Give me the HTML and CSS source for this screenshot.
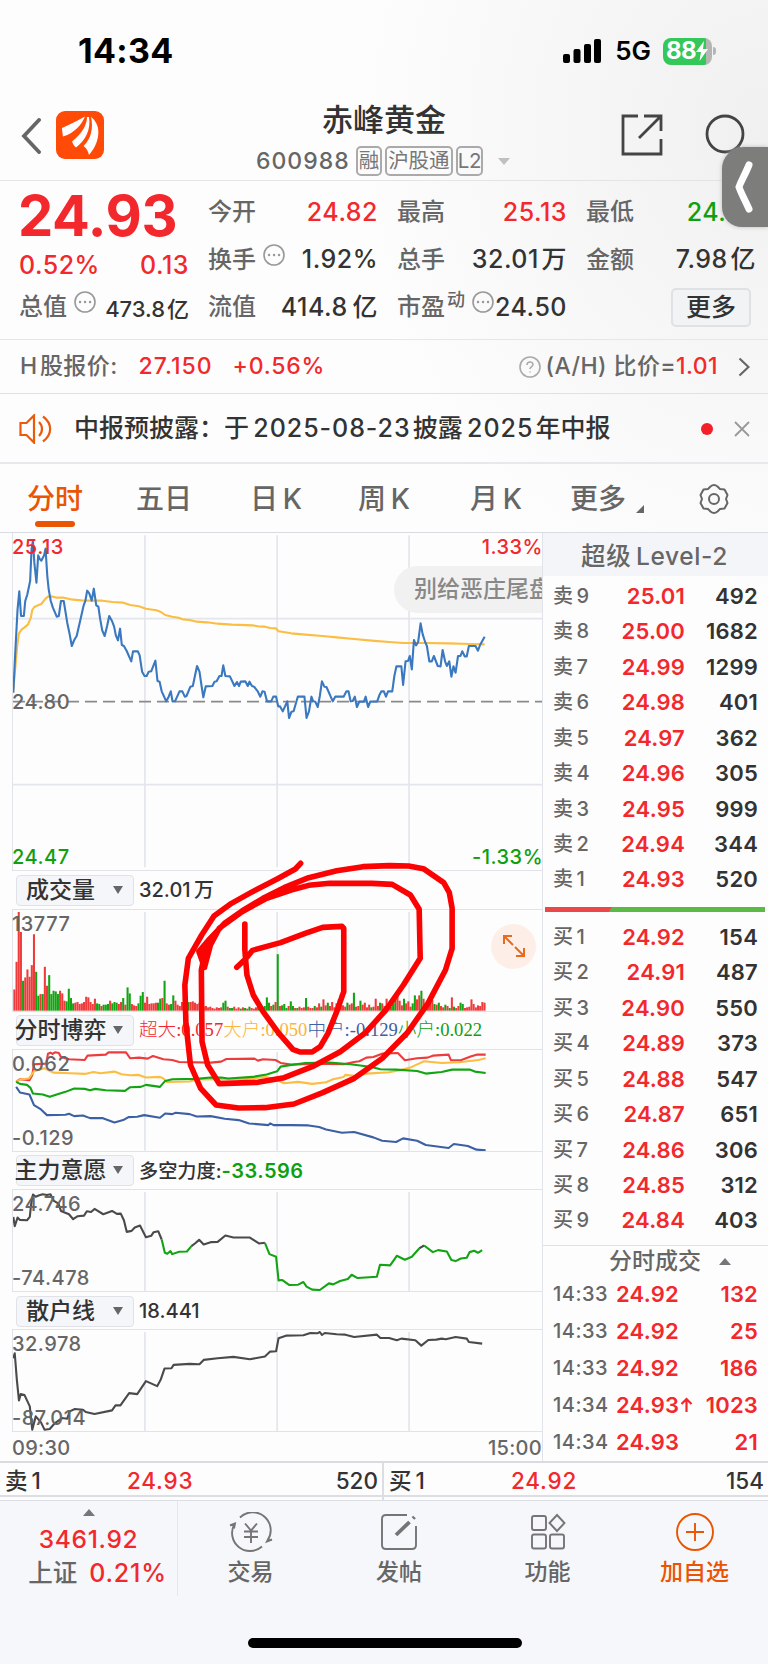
FILE: index.html
```html
<!DOCTYPE html>
<html lang="zh-CN">
<head>
<meta charset="utf-8">
<title>赤峰黄金 600988</title>
<link rel="stylesheet" href="styles.css">
</head>
<body>
<div class="phone">
  <div class="status">
    <span class="time">14:34</span>
    <span class="sys">
      <svg class="signal" viewBox="0 0 38 24"><rect x="0" y="15" width="7" height="9" rx="2"/><rect x="10.5" y="10" width="7" height="14" rx="2"/><rect x="21" y="5" width="7" height="19" rx="2"/><rect x="31" y="0" width="7" height="24" rx="2"/></svg>
      <b class="net">5G</b>
      <span class="batt"><b>88</b><svg viewBox="0 0 12 20"><path d="M8 0 0 11h5L3.500 20 12 8H7z" fill="#fff"/></svg></span><i class="nub"></i>
    </span>
  </div>

  <header class="head">
    <svg class="back" viewBox="0 0 20 36"><path d="M18 2 3 18 18 34"/></svg>
    <svg class="logo" viewBox="0 0 48 48"><rect width="48" height="48" rx="9" fill="#ff4a08"/><path fill="#fff" d="M6 17C13 14 21 10 29 5.500 26 13 19 22 7 25.500 6.500 22 6 19 6 17zM31 6C31 13 27 22 16 30.500 17 33 18 35 20 36.500 30 29 35 18 33 6zM35 6C47 15 43 33 33 44 32 40 31 38 27.500 35 35 28 37.500 17 35 6z"/></svg>
    <div class="title">
      <h1>赤峰黄金</h1>
      <div class="code"><span>600988</span><i>融</i><i>沪股通</i><i class="l2">L2</i><em class="tri down"></em></div>
    </div>
    <svg class="share" viewBox="0 0 42 42"><path d="M17 2H2V40H40V25M23 2H40V17M40 2 18 24"/></svg>
    <svg class="search" viewBox="0 0 48 48"><circle cx="20" cy="20" r="18"/><path d="m33 33 11 11"/></svg>
  </header>
  <div class="drawer"><svg viewBox="0 0 24 56"><path d="M17 6C11 20 9 22 7 28 9 34 11 37 17 50"/></svg></div>

  <section class="quote">
    <div class="col first">
      <strong class="last">24.93</strong>
      <div class="row red chg"><b>0.52%</b><span>0.13</span></div>
      <div class="row mv"><label>总值</label><svg class="dots" viewBox="0 0 22 22"><circle cx="11" cy="11" r="10"/><path d="M6 11h.1M11 11h.1M16 11h.1"/></svg><span>473.8&#8202;亿</span></div>
    </div>
    <div class="col">
      <div class="row"><label>今开</label><span class="red">24.82</span></div>
      <div class="row"><label>换手</label><svg class="dots" viewBox="0 0 22 22"><circle cx="11" cy="11" r="10"/><path d="M6 11h.1M11 11h.1M16 11h.1"/></svg><span>1.92%</span></div>
      <div class="row"><label>流值</label><span>414.8&#8201;亿</span></div>
    </div>
    <div class="col">
      <div class="row"><label>最高</label><span class="red">25.13</span></div>
      <div class="row"><label>总手</label><span>32.01&#8202;万</span></div>
      <div class="row"><label>市盈<sup>动</sup></label><svg class="dots" viewBox="0 0 22 22"><circle cx="11" cy="11" r="10"/><path d="M6 11h.1M11 11h.1M16 11h.1"/></svg><span>24.50</span></div>
    </div>
    <div class="col">
      <div class="row"><label>最低</label><span class="green">24.77</span></div>
      <div class="row"><label>金额</label><span>7.98&#8202;亿</span></div>
      <div class="row"><button class="more">更多</button></div>
    </div>
  </section>

  <section class="hshare">
    <span>H&#8202;股报价:</span><b class="red p1">27.150</b><b class="red p2">+0.56%</b>
    <svg class="help" viewBox="0 0 22 22"><circle cx="11" cy="11" r="10"/><path d="M8 9c0-4 6-4 6-.5 0 2-3 2.200-3 4.500M11 15.500v1"/></svg>
    <span class="ratio">(A/H) 比价=<b class="red">1.01</b></span>
    <svg class="chev" viewBox="0 0 12 20"><path d="m1.500 1.500 9 8.500-9 8.500"/></svg>
  </section>

  <section class="notice">
    <svg class="horn" viewBox="0 0 33 30"><path d="M1.500 9h6L15 1.500v27L7.500 21h-6zM20 8c4 4 4 10 0 14M24 2.500c9.500 7 9.500 18 0 25"/></svg>
    <p>中报预披露：于&#8201;<span>2025-08-23</span>&#8202;披露&#8201;<span>2025</span>&#8202;年中报</p>
    <i class="dot"></i>
    <svg class="close" viewBox="0 0 16 16"><path d="m1 1 14 14M15 1 1 15"/></svg>
  </section>

  <nav class="tabs">
    <span class="on">分时</span><span>五日</span><span>日&#8201;K</span><span>周&#8201;K</span><span>月&#8201;K</span><span class="mt">更多<i></i></span>
    <svg class="gear" viewBox="0 0 32 32"><path d="M12.500 3.500Q16 .5 19.500 3.500L22 6 26.500 6.500 29.500 12 28 16 29.500 20 26.500 25.500 22 26 19.500 28.500Q16 31.500 12.500 28.500L10 26 5.500 25.500 2.500 20 4 16 2.500 12 5.500 6.500 10 6z"/><circle cx="16" cy="16" r="5"/></svg>
  </nav>

  <main class="board">
    <div class="charts">
      <div class="plot price">
        <svg viewBox="35 11 1512 1011" preserveAspectRatio="none">
          <path class="grid" d="M412 18V1014M790 18V1014M1167 18V1014M35 268H1547M35 766H1547"/>
          <path class="dash" d="M35 517H1547"/>
          <path class="ln amber" d="M36 480 42 410 47 350 52 312 60 300 68 294 78 285 86 265 90 242 96 233 106 228 116 224 128 208 136 201 150 202 160 205 180 205 200 210 230 213 255 214 290 214 320 218 350 220 370 227 395 231 415 238 445 243 458 248 470 257 490 262 508 265 520 270 540 272 560 277 590 279 620 283 660 286 720 288 735 291 755 292 770 296 786 297 794 306 830 312 870 316 920 320 960 324 1010 329 1060 334 1110 338 1150 341 1220 341 1280 342 1340 344 1383 345"/>
          <path class="ln blue" d="M36 490 40 400 44 320 48 240 53 186 58 260 66 260 70 215 76 195 84 155 88 60 92 34 96 100 102 160 107 78 112 90 116 94 124 78 128 58 133 140 137 180 143 215 149 235 160 262 166 260 172 215 180 215 190 280 197 315 203 350 210 332 217 320 228 270 237 228 242 214 247 184 253 192 260 214 266 178 273 228 279 232 284 268 290 303 297 320 304 290 310 260 318 275 324 292 329 318 335 333 341 298 346 347 352 350 360 365 373 396 378 366 392 366 397 378 404 427 411 440 417 440 423 427 430 426 442 394 448 455 454 457 460 486 473 516 480 502 486 486 491 516 498 516 511 486 519 486 526 502 531 500 542 472 549 470 555 440 561 410 568 427 574 470 579 504 586 471 605 470 611 457 617 456 625 440 631 440 636 408 642 440 655 441 668 470 675 458 681 470 686 457 699 456 706 470 711 457 718 470 724 472 735 487 742 502 748 486 754 487 761 516 773 516 779 502 787 502 793 531 798 531 806 546 819 516 824 566 831 547 837 546 849 502 868 502 874 566 881 546 888 502 893 516 899 517 906 533 912 500 918 456 925 472 931 473 949 516 956 502 980 502 988 486 994 486 1000 516 1006 515 1012 502 1018 533 1025 517 1038 517 1043 502 1050 533 1056 517 1076 516 1082 498 1088 486 1095 486 1101 502 1107 486 1119 486 1125 440 1131 411 1145 411 1150 467 1157 396 1164 395 1169 380 1175 420 1181 332 1187 348 1193 338 1200 282 1206 315 1213 338 1218 350 1225 396 1232 396 1238 380 1249 410 1257 411 1263 362 1270 396 1275 410 1282 396 1288 442 1294 411 1300 430 1307 380 1314 380 1319 366 1326 381 1332 381 1338 350 1357 350 1364 364 1370 347 1383 322"/>
        </svg>
        <span class="tl red">25.13</span><span class="tr red">1.33%</span><span class="ml">24.80</span><span class="bl green">24.47</span><span class="br green">-1.33%</span>
        <div class="barrage">别给恶庄尾盘</div>
      </div>
      <div class="ind"><div class="sel">成交量<i></i></div><span>32.01&#8201;万</span></div>
      <div class="plot sub">
        <svg viewBox="35 149 1512 304" preserveAspectRatio="none">
          <path class="grid" d="M412 155V454M790 155V454M1167 155V454"/>
          <g id="vol"></g>
        </svg>
        <span class="tl">13777</span>
        <div class="expand"><svg viewBox="0 0 24 24"><path d="M2 10V2h8M2 2l9 9M22 14v8h-8M22 22l-9-9"/></svg></div>
      </div>
      <div class="ind"><div class="sel">分时博弈<i></i></div><span class="legend"><span class="red">超大:0.057</span><span class="c2">大户:0.050</span><span class="c3">中户:-0.129</span><span class="green">小户:0.022</span></span></div>
      <div class="plot sub">
        <svg viewBox="35 569 1512 304" preserveAspectRatio="none">
          <path class="grid" d="M412 575V872M790 575V872M1167 575V872"/>
          <path class="ln r" d="M44 665 55 657 82 660 90 645 95 612 130 610 135 580 142 577 148 581 155 576 166 578 172 590 195 597 240 599 248 586 300 583 308 576 358 576 370 594 395 592 420 595 435 587 465 597 490 599 510 605 600 607 630 604 645 596 725 595 735 601 750 597 785 599 800 608 830 613 900 610 980 612 1010 605 1025 603 1045 592 1065 590 1090 580 1135 578 1155 600 1190 594 1220 592 1235 586 1280 583 1287 600 1315 600 1345 588 1360 583 1386 583"/>
          <path class="ln amber" d="M44 665 55 658 80 655 95 633 125 624 150 637 200 639 240 641 265 635 285 639 325 634 345 642 370 645 395 644 415 652 455 650 465 655 475 665 540 664 560 658 640 657 700 656 760 650 790 660 810 669 850 665 890 671 930 666 950 657 980 650 985 644 1020 648 1045 640 1110 636 1140 630 1170 622 1195 610 1210 603 1260 608 1310 606 1340 602 1365 599 1386 594"/>
          <path class="ln g" d="M44 665 55 671 75 674 85 683 92 700 120 703 140 710 160 703 185 695 210 685 240 686 255 690 270 686 300 690 355 692 370 681 400 680 415 674 455 680 470 662 490 657 560 656 600 652 630 652 650 655 720 650 760 643 790 633 800 619 830 614 870 608 940 607 1000 612 1060 620 1085 627 1130 628 1190 632 1215 640 1260 635 1290 628 1340 628 1355 634 1386 638"/>
          <path class="ln n" d="M44 680 55 697 82 703 95 735 115 748 132 765 185 764 195 761 210 768 235 766 255 774 290 774 325 787 350 780 365 771 390 770 410 765 455 773 470 760 490 762 500 758 540 762 560 769 600 768 640 776 680 780 710 790 765 795 770 790 780 795 830 795 880 796 910 801 930 808 975 818 1010 816 1065 832 1090 842 1130 846 1150 835 1190 842 1215 855 1280 864 1295 852 1335 858 1360 869 1386 871"/>
        </svg>
        <span class="tl">0.062</span><span class="bl">-0.129</span>
      </div>
      <div class="ind"><div class="sel">主力意愿<i></i></div><span class="force">多空力度:<b class="green">-33.596</b></span></div>
      <div class="plot sub">
        <svg viewBox="35 119 1512 304" preserveAspectRatio="none">
          <path class="grid" d="M412 125V424M790 125V424M1167 125V424"/>
          <path class="ln k" d="M36 200 40 228 48 202 55 209 75 210 83 200 87 160 92 133 100 139 110 135 120 132 132 134 142 132 152 152 165 160 172 182 195 192 207 207 220 198 238 196 246 183 258 185 268 176 293 192 318 182 332 191 343 190 352 210 360 245 374 242 383 232 398 226 415 261 430 257 437 246 450 243 460 268"/>
          <path class="ln g" d="M460 268 469 308 476 311 485 303 490 312 510 305 532 304 545 288"/>
          <path class="ln k" d="M545 288 555 280 567 269 580 283 600 276 620 275 642 256 665 262 712 262 738 280 755 278"/>
          <path class="ln g" d="M755 278 768 312 787 320 794 391 805 390 825 405 850 404 865 396 874 410 890 419 912 420 938 400 950 403 970 393 992 387 1003 374 1020 384 1075 380 1084 344 1113 346 1132 317 1155 329 1175 320 1196 295"/>
          <path class="ln k" d="M1196 295 1210 286"/>
          <path class="ln g" d="M1210 286 1235 306 1250 300 1275 304 1288 330 1300 333 1315 325 1332 323 1340 306 1353 302 1364 308 1376 300"/>
        </svg>
        <span class="tl">24.746</span><span class="bl">-74.478</span>
      </div>
      <div class="ind"><div class="sel">散户线<i></i></div><span>18.441</span></div>
      <div class="plot sub">
        <svg viewBox="35 540 1512 304" preserveAspectRatio="none">
          <path class="grid" d="M412 546V845M790 546V845M1167 546V845"/>
          <path class="ln k" d="M36 625 40 610 46 690 52 752 57 733 68 736 83 770 90 840 100 800 115 818 125 840 140 838 155 820 175 805 190 807 197 785 212 778 235 780 243 787 268 793 318 782 328 767 342 767 367 730 390 733 415 694 447 709 457 690 468 656 488 655 494 645 540 642 568 643 580 630 620 625 665 621 712 628 755 620 770 605 787 604 794 565 815 557 865 556 885 549 905 550 912 546 918 555 926 549 960 553 985 554 1010 561 1075 554 1085 564 1110 564 1132 571 1145 566 1185 571 1202 587 1222 570 1245 569 1260 566 1272 568 1300 561 1332 566 1338 576 1376 581"/>
        </svg>
        <span class="tl">32.978</span><span class="bl">-87.014</span>
      </div>
      <div class="axis"><span>09:30</span><span>15:00</span></div>
      <svg class="scribble" viewBox="0 0 1568 960" preserveAspectRatio="none"><path d="M857 10 842 27 790 57 720 95 660 130 610 168 575 225 537 295 527 375 530 490 543 615 572 685 616 735 680 744 755 743 838 732 920 698 1010 655 1090 595 1160 520 1220 430 1270 330 1289 265 1289 145 1281 98 1265 68 1207 26 1165 18 1110 17 1035 20 960 32 880 53 810 83 750 115 690 153 640 190 595 240 567 275 583 322M583 322 600 255 625 205 690 155 760 115 830 90 880 76 940 70 1060 70 1118 73 1170 105 1195 148 1198 295 1150 375 1100 450 1040 520 970 575 890 620 810 653 735 667 625 671 592 615 576 545 574 330 590 250M698 192V270L704 345 722 405 750 455 795 520 835 568 855 576 890 576 913 560 935 520 960 455 980 395V205L975 199 920 202 870 220 800 248 720 271 700 297 675 322"/></svg>
    </div>

    <aside class="book">
      <h2>超级&#8201;Level-2</h2>
      <ul class="levels sell">
        <li><label>卖&#8201;9</label><b>25.01</b><span>492</span></li>
        <li><label>卖&#8201;8</label><b>25.00</b><span>1682</span></li>
        <li><label>卖&#8201;7</label><b>24.99</b><span>1299</span></li>
        <li><label>卖&#8201;6</label><b>24.98</b><span>401</span></li>
        <li><label>卖&#8201;5</label><b>24.97</b><span>362</span></li>
        <li><label>卖&#8201;4</label><b>24.96</b><span>305</span></li>
        <li><label>卖&#8201;3</label><b>24.95</b><span>999</span></li>
        <li><label>卖&#8201;2</label><b>24.94</b><span>344</span></li>
        <li><label>卖&#8201;1</label><b>24.93</b><span>520</span></li>
      </ul>
      <div class="balance"></div>
      <ul class="levels buy">
        <li><label>买&#8201;1</label><b>24.92</b><span>154</span></li>
        <li><label>买&#8201;2</label><b>24.91</b><span>487</span></li>
        <li><label>买&#8201;3</label><b>24.90</b><span>550</span></li>
        <li><label>买&#8201;4</label><b>24.89</b><span>373</span></li>
        <li><label>买&#8201;5</label><b>24.88</b><span>547</span></li>
        <li><label>买&#8201;6</label><b>24.87</b><span>651</span></li>
        <li><label>买&#8201;7</label><b>24.86</b><span>306</span></li>
        <li><label>买&#8201;8</label><b>24.85</b><span>312</span></li>
        <li><label>买&#8201;9</label><b>24.84</b><span>403</span></li>
      </ul>
      <h3>分时成交<i class="tri up"></i></h3>
      <ul class="ticks">
        <li><label>14:33</label><b>24.92</b><span>132</span></li>
        <li><label>14:33</label><b>24.92</b><span>25</span></li>
        <li><label>14:33</label><b>24.92</b><span>186</span></li>
        <li><label>14:34</label><b>24.93<svg viewBox="0 0 13 16"><path d="M6.500 15V2M1.500 7l5-5 5 5"/></svg></b><span>1023</span></li>
        <li><label>14:34</label><b>24.93</b><span>21</span></li>
      </ul>
    </aside>
  </main>

  <div class="best">
    <div><label>卖&#8201;1</label><b class="red">24.93</b><span>520</span></div>
    <div><label>买&#8201;1</label><b class="red">24.92</b><span>154</span></div>
  </div>

  <footer class="foot">
    <div class="index"><i class="tri up"></i><b class="red">3461.92</b><p>上证<b class="red">0.21%</b></p></div>
    <div class="act"><svg class="wide" viewBox="0 0 44 40"><path d="M11 5.500A18 18 0 0 1 38.500 28.500M33 34.500A18 18 0 0 1 5.500 12M1 13.500 6 11.500 5 16.500M43 27.500 38 29.500 40.500 24.500M16 11.500 22 18.500 28 11.500M22 18.500V31M15 19.500H29M15 25H29"/></svg>交易</div>
    <div class="act"><svg viewBox="0 0 40 40"><path d="M28 3H7Q3 3 3 7V33Q3 37 7 37H33Q37 37 37 33V14"/><path class="thick" d="M17 23 30.500 10M34 6.500l1.500-1.500"/></svg>发帖</div>
    <div class="act"><svg viewBox="0 0 40 40"><rect x="4" y="4" width="14" height="14" rx="2"/><rect x="4" y="22.500" width="14" height="14" rx="2"/><rect x="22" y="22.500" width="14" height="14" rx="2"/><path d="m29 3 7.500 8-7.500 8-7.500-8z"/></svg>功能</div>
    <div class="act add"><svg viewBox="0 0 40 40"><circle cx="20" cy="20" r="18"/><path d="M20 11v18M11 20h18"/></svg>加自选</div>
    <div class="homebar"></div>
  </footer>
</div>
<script src="volume.js"></script>
</body>
</html>
```
FILE: volume.js
```js
// Per-minute volume; a negative value is a falling minute.
const volume = [64,147,297,237,-90,100,124,102,137,230,-117,-45,50,-50,132,75,-107,-50,-60,-58,-50,60,52,30,-28,-66,-38,-22,24,26,20,22,26,42,40,26,20,36,-22,-20,14,-18,-18,-20,30,-22,-26,-24,20,26,-38,18,-70,-52,20,16,14,-22,-45,-56,24,42,20,22,22,24,-24,-36,38,-90,22,18,-20,-46,30,18,14,26,20,14,-26,26,28,24,20,24,10,12,14,10,12,8,6,10,8,10,-24,-30,12,-8,-8,12,6,10,-6,10,-8,6,-12,8,6,10,-24,8,8,-14,-40,-24,14,-18,26,-170,14,-16,-20,-8,14,-28,-14,8,-8,12,8,10,-38,12,8,8,-14,10,22,-12,34,16,-24,14,26,10,22,-34,50,16,12,-24,18,22,-54,12,14,-30,18,24,10,18,-10,12,36,14,-24,22,14,36,18,12,-22,-38,46,30,16,-36,22,28,12,-22,-46,34,46,-60,36,-24,20,26,32,-20,18,-24,14,10,-18,14,-8,40,-12,8,14,-24,-20,8,10,12,34,20,10,16,14,26,24];
const svgNs = "http://www.w3.org/2000/svg";
const group = document.getElementById("vol");
volume.forEach((v, i) => {
  const bar = document.createElementNS(svgNs, "rect");
  bar.setAttribute("x", 36 + i * (1350 / volume.length));
  bar.setAttribute("y", 452 - Math.abs(v));
  bar.setAttribute("width", 5.9);
  bar.setAttribute("height", Math.abs(v));
  bar.setAttribute("class", v > 0 ? "up-bar" : "down-bar");
  group.appendChild(bar);
});
```
FILE: styles.css
```css
*{box-sizing:border-box}
body{margin:0;width:768px;height:1664px;overflow:hidden;background:#fdfdfe;color:#333;font-family:Inter,"Noto Sans CJK SC",sans-serif;font-size:24px;font-weight:500;line-height:1}
h1,h2,h3,p,ul{margin:0;padding:0;font-weight:500}
ul{list-style:none}
i,em{font-style:normal}
svg{display:block;fill:none;flex:none}
.phone{position:relative;width:769px;height:1664px;display:flex;flex-direction:column;background:radial-gradient(ellipse 420px 480px at 768px 130px,#f0f0f0,rgba(253,253,254,0)) no-repeat}
.red{color:#f3282c}
.green{color:#0f9f0f}
label{color:#666}
.tri{width:0;height:0;border:6px solid transparent}
.tri.down{border-top:7px solid #c0c0c0;border-bottom:0}
.tri.up{border-bottom:7px solid #75757b;border-top:0}

.status{height:100px;padding:3px 53px 0 78px;display:flex;align-items:center;justify-content:space-between;color:#000}
.time{font-size:34px;font-weight:700;letter-spacing:.3px}
.sys{display:flex;align-items:center}
.signal{width:38px;height:24px;fill:#000}
.net{font-size:26px;font-weight:600;margin-left:14px}
.batt{width:49px;height:27px;margin-left:12px;border-radius:8px;background:linear-gradient(90deg,#34c759 88%,#b5b5b5 88%);color:#fff;display:flex;align-items:center;padding-left:3px}
.batt b{font-size:24px;font-weight:700;letter-spacing:-.5px}
.batt svg{width:12px;height:20px}
.nub{width:3px;height:8px;margin-left:1px;background:#b5b5b5;border-radius:0 3px 3px 0}

.head{height:81px;border-bottom:1px solid #e4e4e6;display:flex;align-items:flex-start;padding-left:21px}
.back{width:20px;height:36px;margin-top:18px;stroke:#666;stroke-width:3.800;stroke-linecap:round}
.logo{width:48px;height:48px;margin:11px 0 0 15px}
.title{width:252px;margin-left:152px;display:flex;flex-direction:column}
h1{font-size:31px;line-height:40px;padding-left:66px;white-space:nowrap}
.code{display:flex;align-items:center;margin-top:6px;height:31px;color:#666;font-size:23px}
.code span{letter-spacing:1px;margin-right:6px}
.code i{height:30px;border:2px solid #aaa;border-radius:5px;font-size:20.500px;line-height:26px;font-weight:400;color:#777;padding:0 1px;margin-right:3px;white-space:nowrap}
.code .l2{padding:0;letter-spacing:-.3px;width:28px;text-align:center}
.code em{margin-left:12px}
.share{width:42px;height:42px;margin:14px 0 0 113px;stroke:#444;stroke-width:2.800}
.search{width:48px;height:48px;margin:14px 0 0 42px;stroke:#444;stroke-width:2.800}
.drawer{position:absolute;left:722px;top:147px;width:46px;height:80px;background:#7d7e7c;border-radius:22px 0 0 20px;padding:12px 0 0 10px;box-shadow:0 0 4px #bbb}
.drawer svg{width:24px;height:56px;stroke:#fff;stroke-width:7;stroke-linecap:round}

.quote{height:159px;border-bottom:1px solid #e6e6e9;padding:8px 12px 0 19px;display:grid;grid-template-columns:repeat(4,169px);gap:20px;font-size:25px}
.col .row{height:47.500px;display:flex;align-items:center;white-space:nowrap}
.row label{font-size:24px}
.row b{font-weight:500}
.row span,.row b{letter-spacing:.5px}
.row span{margin-left:auto;margin-right:-1px}
.last{display:block;height:56px;font-size:56px;line-height:54px;font-weight:700;color:#f3282c;letter-spacing:-.3px;margin-left:-1px}
.col .chg{height:42px}
.col .mv{height:41px}
.col .mv span{font-size:22px;padding-top:4px;letter-spacing:0}
.row sup{font-size:18px;vertical-align:9px;line-height:0;margin-left:2px}
.dots{width:22px;height:22px;margin:-10px 0 0 7px;stroke:#999;stroke-width:1.600}
.dots path{stroke-width:2.400;stroke-linecap:round}
.more{width:80px;height:39px;margin:0 4px 0 auto;border:2px solid #dfe1e5;border-radius:5px;background:#f2f3f5;font:500 25px/1 Inter,"Noto Sans CJK SC",sans-serif;color:#333;padding:0}

.hshare{height:55px;border-bottom:1px solid #dfe1e4;display:flex;align-items:center;padding:1px 19px 0 20px;color:#666;font-size:23px;letter-spacing:.4px;white-space:nowrap}
.hshare b{font-weight:500}
.p1{margin-left:21px;letter-spacing:1px}.p2{margin-left:20px;letter-spacing:.8px}
.help{width:22px;height:22px;margin-left:auto;stroke:#aaa;stroke-width:1.600}
.ratio{margin-left:5px}
.chev{width:12px;height:20px;margin-left:20px;stroke:#666;stroke-width:2.200}

.notice{height:70px;border-bottom:2px solid #e7e8eb;display:flex;align-items:center;padding:1px 19px 0 19px}
.horn{width:33px;height:30px;stroke:#ea5a0c;stroke-width:2.200}
.notice p{margin-left:22px;font-size:25px;white-space:nowrap}
.notice p span{letter-spacing:.95px}
.dot{width:12px;height:12px;border-radius:50%;background:#f3202a;margin-left:auto}
.close{width:16px;height:16px;margin-left:21px;stroke:#999;stroke-width:1.800}

.tabs{height:69px;border-bottom:1px solid #d8dbe2;position:relative;display:grid;grid-template-columns:109px 114px 108px 112px 100px 128px 32px;padding:2px 0 0 27px;align-items:center;color:#666;font-size:28px;white-space:nowrap}
.on{color:#ea5504;position:relative}
.on:after{content:"";position:absolute;left:8px;top:36px;width:40px;height:6px;border-radius:3px;background:#ea5504}
.mt{display:flex;align-items:flex-end}
.mt i{border:4px solid #666;border-left-color:transparent;border-top-color:transparent;margin-left:10px}
.gear{width:32px;height:32px;stroke:#666;stroke-width:2;stroke-linejoin:round}

.board{height:928px;display:flex}
.charts{position:relative;width:543px;padding-left:12px}
.plot{position:relative;width:531px;border:1px solid #e1e3ea;border-top:0}
.plot>svg{width:100%;height:100%}
.price{height:338px}
.sub{height:102px}
.plot>span{position:absolute;font-size:20px;color:#666;letter-spacing:.5px}
.plot>.red{color:#f3282c}.plot>.green{color:#0f9f0f}
.plot>.tl{left:-1px;top:4px}.plot>.tr{right:-1px;top:4px}.plot>.ml{left:-1px;top:159px}.plot>.bl{left:-1px;bottom:3px}.plot>.br{right:-1px;bottom:3px}
.grid{stroke:#e4e6ee;stroke-width:1.700}
.dash{stroke:#8a8a8a;stroke-width:1.600;stroke-dasharray:12 6}
.ln{stroke-width:2.100;stroke-linejoin:round}
.plot path{vector-effect:non-scaling-stroke}
.blue{stroke:#3a78bf}.amber{stroke:#fbbd42}.r{stroke:#ee3b3b}.g{stroke:#12a412}.n{stroke:#3c60a4}.k{stroke:#4a4a4a}
.up-bar{fill:#ee3b3b}.down-bar{fill:#12a412}
.barrage{position:absolute;right:0;top:33px;width:148px;height:47px;overflow:hidden;border-radius:24px 0 0 24px;background:#f1f1f2;color:#888;font-size:23px;line-height:47px;padding-left:20px;white-space:nowrap}
.ind{height:38.250px;width:531px;display:flex;align-items:center;border-bottom:1px solid #e1e3ea;border-right:1px solid #e1e3ea;font-size:20px;white-space:nowrap;padding:1px 0 0 4px}
.sel{position:relative;width:118px;height:31px;border:1.500px solid #e0e2e8;border-radius:4px;background:#f4f6f9;font-size:23px;line-height:28px;padding-right:29px;margin-right:5px;display:flex;justify-content:center}
.sel i{position:absolute;right:10px;top:10px;border:5px solid transparent;border-top:8px solid #666;border-bottom:0}
.legend{font-family:"Liberation Serif","Noto Sans CJK SC",serif;font-size:18.600px;font-weight:300}
.c2{color:#fbb53a}.c3{color:#3c60a4}
.force{font-size:19.200px}
.force b{font-weight:600;font-size:20px;letter-spacing:.5px}
.expand{position:absolute;right:6px;top:14px;width:45px;height:45px;border-radius:50%;background:#fdefe7;display:grid;place-items:center}
.expand svg{width:24px;height:24px;stroke:#ea6a1c;stroke-width:2}
.axis{width:531px;display:flex;justify-content:space-between;color:#666;font-size:20px;padding-top:6px;border-right:1px solid #e1e3ea;height:29px;letter-spacing:.3px}
.scribble{position:absolute;left:0;top:327px;width:550px;height:320px;stroke:#fb0303;stroke-width:5.600;stroke-linecap:round;stroke-linejoin:round;z-index:3}
.scribble path{vector-effect:non-scaling-stroke}

.book{width:225px}
h2{height:43px;background:#f3f5f8;color:#666;font-size:24.500px;line-height:46px;text-align:center;letter-spacing:.6px;padding-right:2px}
.levels li,.ticks li{height:35.450px;display:flex;align-items:center;padding:0 10px;font-size:22px}
.levels label,.ticks label{width:54px;font-size:20px}
.levels b,.ticks b{font-weight:600;color:#f3282c;letter-spacing:.2px}
.levels b{width:78px;text-align:right}
.levels span,.ticks span{margin-left:auto;font-weight:600;color:#333;letter-spacing:.2px}
.sell{padding-top:2px}
.balance{height:5px;margin:10px 3px 7px 2px;background:linear-gradient(120deg,#ea4848 30%,#5aba45 30%)}
.buy{height:326px}
h3{height:31px;border-top:1.500px solid #dfe1e6;color:#666;font-size:23px;display:flex;align-items:center;padding:1px 0 0 66px}
h3 .tri{margin-left:18px}
.ticks{margin-top:-.5px}
.ticks li{height:37px}
.ticks label{width:63px;letter-spacing:.5px}
.ticks b{display:flex;align-items:center}
.ticks svg{width:13px;height:16px;margin-left:1px;stroke:#f3282c;stroke-width:2.200}
.ticks span{color:#f3282c}

.best{height:40px;border-top:2px solid #d9dbe0;border-bottom:1.500px solid #dcdee3;display:grid;grid-template-columns:384px 384px;font-size:22.500px;background:linear-gradient(#dcdee3,#dcdee3) 0 32px/100% 2px no-repeat}
.best div{position:relative;height:38px;padding:0 4px 3px 5px;display:flex;align-items:center;border-right:2px solid #dcdee3}
.best div+div{border:0}
.best label{width:122px;color:#333}
.best b{font-weight:500;letter-spacing:.8px}
.best span{margin-left:auto}

.foot{position:relative;height:163px;background:#f6f7fa;display:grid;grid-template-columns:178px 145px 152px 145px 149px;color:#666;font-size:23px}
.index{height:95px;border-right:1px solid #e6e7ea;display:flex;flex-direction:column;align-items:center;padding-top:8px}
.index b{font-weight:500}
.index>b{margin-top:11px;font-size:24.500px;letter-spacing:.7px}
.index p{margin-top:9px;padding-left:18px;font-size:24.500px;white-space:nowrap}
.index p b{font-size:25px;margin-left:12px;letter-spacing:.8px}
.act{display:flex;flex-direction:column;align-items:center;padding-top:11px;gap:9px}
.act svg{height:40px;width:40px;stroke:#757575;stroke-width:1.900}
.act .wide{width:44px}
.act .thick{stroke-width:3.800}
.act.add{color:#ea5504}
.add svg{stroke:#ea5504}
.homebar{position:absolute;left:248px;top:137px;width:274px;height:10px;border-radius:5px;background:#000}
```
